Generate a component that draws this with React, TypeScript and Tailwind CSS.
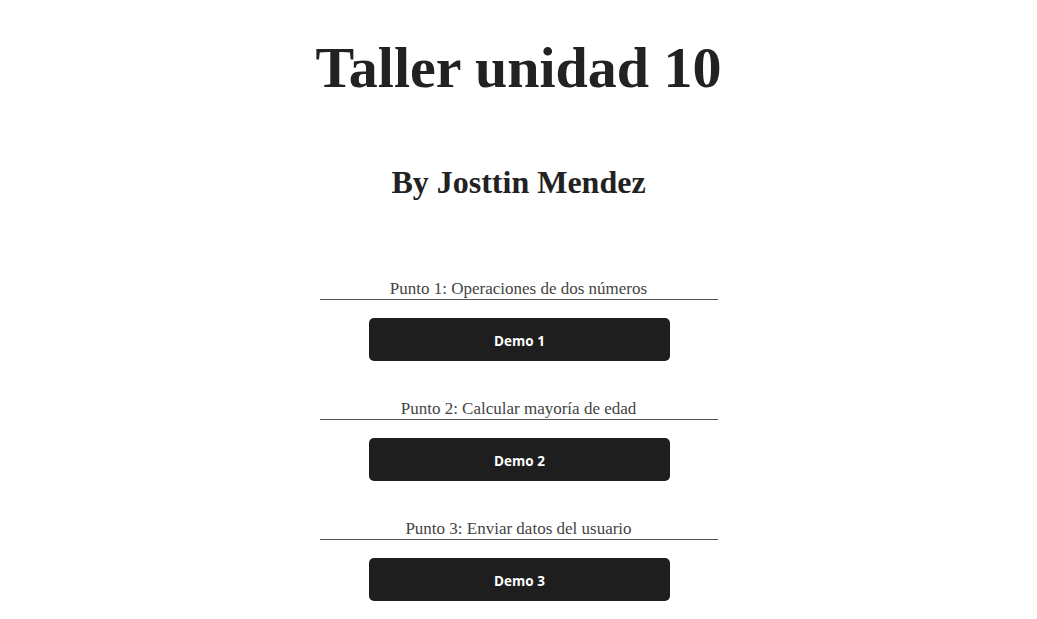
import type React from "react"

const items = [
  { label: "Punto 1: Operaciones de dos números", demo: "Demo 1" },
  { label: "Punto 2: Calcular mayoría de edad", demo: "Demo 2" },
  { label: "Punto 3: Enviar datos del usuario", demo: "Demo 3" },
]

export default function App(): React.JSX.Element {
  return (
    <main className="min-h-screen bg-white font-['Liberation_Serif',serif] text-[#222]">
      <header className="flex flex-col items-center">
        <h1 className="mt-[35px] text-[58px] font-bold leading-[66px]">
          Taller unidad 10
        </h1>
        <h2 className="mt-[63px] text-[32px] font-bold leading-[37px]">
          By Josttin Mendez
        </h2>
      </header>
      <section className="mx-auto mt-[78px] flex w-[398px] flex-col gap-[38px]">
        {items.map((item) => (
          <div key={item.demo} className="flex flex-col items-center">
            <p className="w-full border-b border-[#555] text-center text-[17px] leading-[20px] text-[#444]">
              {item.label}
            </p>
            <button className="mt-[18px] ml-[2px] h-[43px] w-[301px] rounded-[5px] bg-[#1e1e1e] pt-[3px] font-['Open_Sans',sans-serif] text-[13.5px] font-bold text-white">
              {item.demo}
            </button>
          </div>
        ))}
      </section>
    </main>
  )
}
